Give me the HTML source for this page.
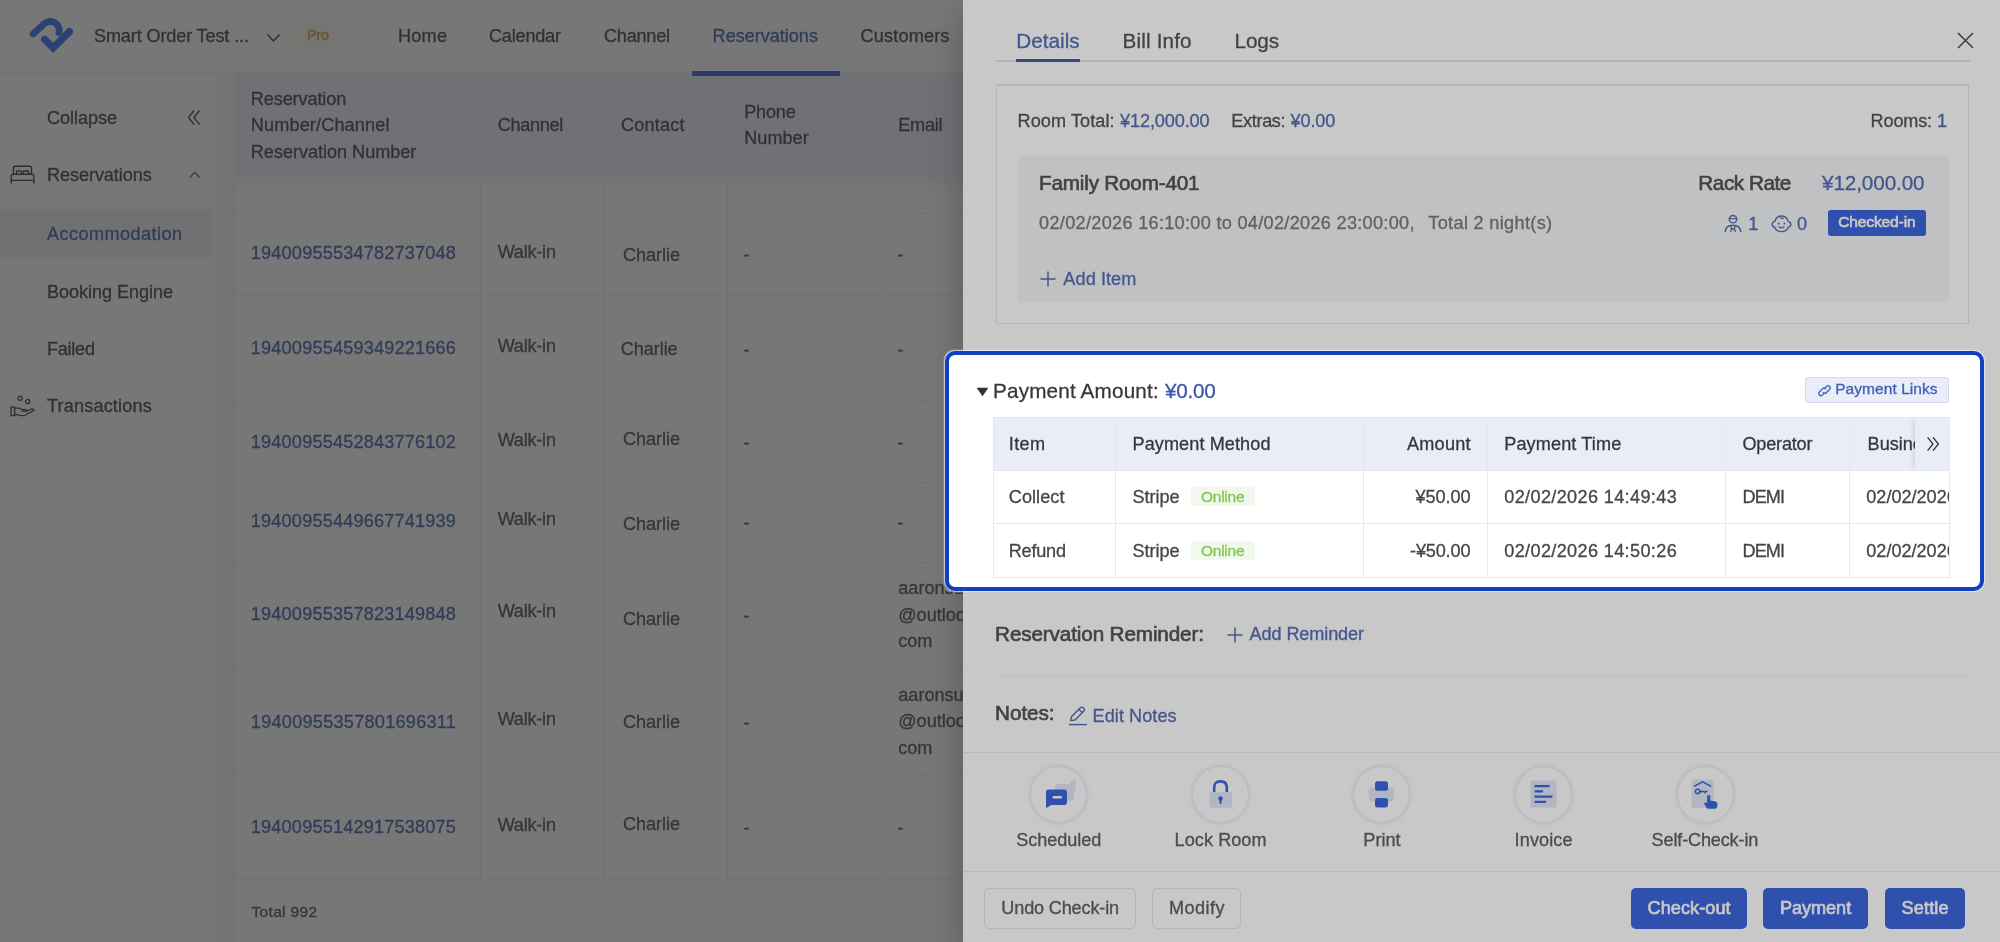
<!DOCTYPE html>
<html lang="en"><head><meta charset="utf-8"><title>Reservations</title>
<style>
*{margin:0;padding:0}
html,body{width:2000px;height:942px;overflow:hidden;background:#fff}
body{position:relative;font-family:"Liberation Sans",sans-serif;}
.t{position:absolute;white-space:nowrap;line-height:1;-webkit-text-stroke:0.3px currentColor;filter:blur(0.45px);}
svg{filter:blur(0.4px);}
.m{-webkit-text-stroke:0.65px currentColor;}
#app{position:absolute;left:0;top:0;width:2000px;height:942px;overflow:hidden;}
#mask{position:absolute;left:0;top:0;width:2000px;height:942px;background:rgba(0,0,0,.47);}
#drawer{position:absolute;left:963.4px;top:0;width:1036.6px;height:942px;background:#fff;overflow:hidden;
 box-shadow:0 10px 13px -6px rgba(0,0,0,.2),0 20px 31px 3px rgba(0,0,0,.14),0 8px 39px 6px rgba(0,0,0,.12);}
#tour{position:absolute;left:0;top:0;width:2000px;height:942px;background:rgba(89,89,89,.33);}
#hl{position:absolute;left:945px;top:351px;width:1031px;height:232px;background:#fff;border:4px solid #1041c1;border-radius:10px;overflow:hidden;box-shadow:0 0 1.5px 0.5px rgba(225,232,255,.9);}
#app,#drawer,#hl{will-change:transform;}
</style></head>
<body>
<div id="app"><header style="position:absolute;left:0.00px;top:0.00px;width:2000.00px;height:73.50px;background:#fff;border-bottom:1px solid #e6e6e6;box-sizing:border-box;"><svg style="position:absolute;left:26.00px;top:14.00px;" width="52.00" height="44.00" viewBox="0 0 52.00 44.00" fill="none"><path d="M7.2 20 L18 9.9 Q23.8 4.9 29.8 9.3 Q34.6 13.6 32.8 18.6" stroke="#2b6cf5" stroke-width="6.8" stroke-linecap="round" stroke-linejoin="round"/><path d="M18.6 25.2 L27.2 33.8 L43.4 17.6" stroke="#2b6cf5" stroke-width="7.2" stroke-linecap="round" stroke-linejoin="miter"/></svg><span class="t" style="left:94.00px;top:27.00px;font-size:18.1px;color:#36383b;letter-spacing:-0.136px;">Smart Order Test ...</span><svg style="position:absolute;left:266.00px;top:33.00px;" width="15.00" height="10.00" viewBox="0 0 15.00 10.00" fill="none"><path d="M1.5 1.5 L7.5 8 L13.5 1.5" stroke="#303133" stroke-width="1.4"/></svg><div style="position:absolute;left:288.50px;top:24.00px;width:55.00px;height:24.00px;background:#fbf8ee;border-radius:3px;"></div><span class="t m" style="left:307.00px;top:28.00px;font-size:14.2px;color:#d9a13f;letter-spacing:-0.149px;">Pro</span><div style="position:absolute;left:365.00px;top:25.00px;width:1.00px;height:23.00px;background:#f2f3f5;"></div><span class="t" style="left:398.00px;top:27.00px;font-size:18.1px;color:#36383b;letter-spacing:0.239px;">Home</span><span class="t" style="left:489.00px;top:27.00px;font-size:18.1px;color:#36383b;letter-spacing:-0.208px;">Calendar</span><span class="t" style="left:604.00px;top:27.00px;font-size:18.1px;color:#36383b;letter-spacing:-0.238px;">Channel</span><span class="t" style="left:712.60px;top:27.00px;font-size:18.1px;color:#3a56a6;letter-spacing:-0.021px;">Reservations</span><span class="t" style="left:860.60px;top:27.00px;font-size:18.1px;color:#36383b;letter-spacing:0.162px;">Customers</span></header><aside style="position:absolute;left:0.00px;top:73.50px;width:213.00px;height:868.50px;background:#fff;"><div style="position:absolute;left:0.00px;top:135.50px;width:213.00px;height:48.00px;background:#eeeff6;"></div><span class="t" style="left:47.00px;top:35.50px;font-size:18.1px;color:#36383b;letter-spacing:-0.062px;">Collapse</span><svg style="position:absolute;left:187.00px;top:35.50px;" width="14.00" height="17.00" viewBox="0 0 14.00 17.00" fill="none"><path d="M7 1.5 L1.5 8.5 L7 15.5 M12.5 1.5 L7 8.5 L12.5 15.5" stroke="#303133" stroke-width="1.3"/></svg><svg style="position:absolute;left:10.00px;top:91.50px;" width="25.00" height="20.00" viewBox="0 0 25.00 20.00" fill="none"><path d="M3.5 9 V3 Q3.5 1.2 5.3 1.2 H19.7 Q21.5 1.2 21.5 3 V9" stroke="#303133" stroke-width="1.4"/><path d="M6.5 9 V6.8 Q6.5 6 7.3 6 H10.8 Q11.6 6 11.6 6.8 V9 M13.4 9 V6.8 Q13.4 6 14.2 6 H17.7 Q18.5 6 18.5 6.8 V9" stroke="#303133" stroke-width="1.3"/><path d="M1.2 18.6 V11 Q1.2 9.2 3 9.2 H22 Q23.8 9.2 23.8 11 V18.6 M1.2 15.4 H23.8" stroke="#303133" stroke-width="1.4"/></svg><span class="t" style="left:47.00px;top:92.50px;font-size:18.1px;color:#36383b;letter-spacing:-0.076px;">Reservations</span><svg style="position:absolute;left:187.50px;top:96.50px;" width="13.50" height="10.00" viewBox="0 0 13.50 10.00" fill="none"><path d="M1.6 7.6 L6.75 2.4 L11.9 7.6" stroke="#55575b" stroke-width="1.3"/></svg><span class="t" style="left:47.00px;top:151.50px;font-size:18.1px;color:#3a56a6;letter-spacing:0.435px;">Accommodation</span><span class="t" style="left:47.00px;top:209.50px;font-size:18.1px;color:#36383b;letter-spacing:-0.062px;">Booking Engine</span><span class="t" style="left:47.00px;top:266.50px;font-size:18.1px;color:#36383b;letter-spacing:-0.260px;">Failed</span><svg style="position:absolute;left:10.00px;top:321.50px;" width="25.00" height="23.00" viewBox="0 0 25.00 23.00" fill="none"><circle cx="10.2" cy="3.2" r="2.1" stroke="#303133" stroke-width="1.3"/><circle cx="17.6" cy="6.6" r="2.1" stroke="#303133" stroke-width="1.3"/><path d="M1 12.2 H4.6 V20.6 H1 Z" stroke="#303133" stroke-width="1.3"/><path d="M4.6 13.2 H9 Q11 13.2 12.2 14.6 H15.4 Q17 14.6 17 16.2 H11.4 M17 16 L21.6 14 Q23.6 13.6 24 15.4 L15.6 20 Q13.6 21 11.6 20.6 L4.6 19.4" stroke="#303133" stroke-width="1.3" stroke-linejoin="round"/></svg><span class="t" style="left:47.00px;top:323.50px;font-size:18.1px;color:#36383b;letter-spacing:0.168px;">Transactions</span></aside><main style="position:absolute;left:214.50px;top:73.50px;width:1785.50px;height:868.50px;background:#f5f6f8;overflow:hidden;"><div style="position:absolute;left:20.50px;top:0.00px;width:865.00px;height:868.50px;background:#fff;"></div><div style="position:absolute;left:20.50px;top:0.00px;width:865.00px;height:117.50px;background:linear-gradient(to bottom,#ebeef6 0,#ebeef6 86%,rgba(235,238,246,0) 100%);"></div><div style="position:absolute;left:20.50px;top:139.50px;width:865.00px;height:1.00px;background:#eceef3;"></div><div style="position:absolute;left:20.50px;top:221.50px;width:865.00px;height:1.00px;background:#eceef3;"></div><div style="position:absolute;left:20.50px;top:327.50px;width:865.00px;height:1.00px;background:#eceef3;"></div><div style="position:absolute;left:266.50px;top:408.50px;width:619.00px;height:1.00px;background:#eceef3;"></div><div style="position:absolute;left:20.50px;top:488.50px;width:865.00px;height:1.00px;background:#eceef3;"></div><div style="position:absolute;left:20.50px;top:594.50px;width:865.00px;height:1.00px;background:#eceef3;"></div><div style="position:absolute;left:20.50px;top:700.50px;width:865.00px;height:1.00px;background:#eceef3;"></div><div style="position:absolute;left:20.50px;top:805.50px;width:865.00px;height:1.00px;background:#eceef3;"></div><div style="position:absolute;left:20.50px;top:0.00px;width:1.00px;height:806.50px;background:#eceef3;"></div><div style="position:absolute;left:265.50px;top:0.00px;width:1.00px;height:806.50px;background:#eceef3;"></div><div style="position:absolute;left:388.50px;top:0.00px;width:1.00px;height:806.50px;background:#eceef3;"></div><div style="position:absolute;left:512.50px;top:0.00px;width:1.00px;height:806.50px;background:#eceef3;"></div><div style="position:absolute;left:667.50px;top:0.00px;width:1.00px;height:806.50px;background:#eceef3;"></div><span class="t" style="left:36.30px;top:16.50px;font-size:18.1px;color:#36383b;letter-spacing:-0.108px;">Reservation</span><span class="t" style="left:36.30px;top:42.50px;font-size:18.1px;color:#36383b;letter-spacing:0.144px;">Number/Channel</span><span class="t" style="left:36.30px;top:69.50px;font-size:18.1px;color:#36383b;letter-spacing:-0.023px;">Reservation Number</span><span class="t" style="left:283.20px;top:42.50px;font-size:18.1px;color:#36383b;letter-spacing:-0.304px;">Channel</span><span class="t" style="left:406.50px;top:42.50px;font-size:18.1px;color:#36383b;letter-spacing:0.187px;">Contact</span><span class="t" style="left:529.75px;top:29.50px;font-size:18.1px;color:#36383b;letter-spacing:-0.210px;">Phone</span><span class="t" style="left:529.75px;top:55.50px;font-size:18.1px;color:#36383b;letter-spacing:0.024px;">Number</span><span class="t" style="left:683.75px;top:42.50px;font-size:18.1px;color:#36383b;letter-spacing:-0.253px;">Email</span><span class="t" style="left:36.30px;top:170.50px;font-size:18.1px;color:#3a56a6;letter-spacing:0.203px;">19400955534782737048</span><span class="t" style="left:283.20px;top:169.50px;font-size:18.1px;color:#44464a;letter-spacing:-0.228px;">Walk-in</span><span class="t" style="left:408.50px;top:172.50px;font-size:18.1px;color:#44464a;letter-spacing:-0.057px;">Charlie</span><span class="t" style="left:529.00px;top:172.50px;font-size:18.1px;color:#44464a;">-</span><span class="t" style="left:683.00px;top:172.50px;font-size:18.1px;color:#44464a;">-</span><span class="t" style="left:36.30px;top:265.50px;font-size:18.1px;color:#3a56a6;letter-spacing:0.203px;">19400955459349221666</span><span class="t" style="left:283.20px;top:263.50px;font-size:18.1px;color:#44464a;letter-spacing:-0.228px;">Walk-in</span><span class="t" style="left:406.20px;top:266.50px;font-size:18.1px;color:#44464a;letter-spacing:-0.057px;">Charlie</span><span class="t" style="left:529.00px;top:267.50px;font-size:18.1px;color:#44464a;">-</span><span class="t" style="left:683.00px;top:267.50px;font-size:18.1px;color:#44464a;">-</span><span class="t" style="left:36.30px;top:359.50px;font-size:18.1px;color:#3a56a6;letter-spacing:0.203px;">19400955452843776102</span><span class="t" style="left:283.20px;top:357.50px;font-size:18.1px;color:#44464a;letter-spacing:-0.228px;">Walk-in</span><span class="t" style="left:408.50px;top:356.50px;font-size:18.1px;color:#44464a;letter-spacing:-0.057px;">Charlie</span><span class="t" style="left:529.00px;top:360.50px;font-size:18.1px;color:#44464a;">-</span><span class="t" style="left:683.00px;top:360.50px;font-size:18.1px;color:#44464a;">-</span><span class="t" style="left:36.30px;top:438.50px;font-size:18.1px;color:#3a56a6;letter-spacing:0.203px;">19400955449667741939</span><span class="t" style="left:283.20px;top:436.50px;font-size:18.1px;color:#44464a;letter-spacing:-0.228px;">Walk-in</span><span class="t" style="left:408.50px;top:441.50px;font-size:18.1px;color:#44464a;letter-spacing:-0.057px;">Charlie</span><span class="t" style="left:529.00px;top:440.50px;font-size:18.1px;color:#44464a;">-</span><span class="t" style="left:683.00px;top:440.50px;font-size:18.1px;color:#44464a;">-</span><span class="t" style="left:36.30px;top:531.50px;font-size:18.1px;color:#3a56a6;letter-spacing:0.203px;">19400955357823149848</span><span class="t" style="left:283.20px;top:528.50px;font-size:18.1px;color:#44464a;letter-spacing:-0.228px;">Walk-in</span><span class="t" style="left:408.50px;top:536.50px;font-size:18.1px;color:#44464a;letter-spacing:-0.057px;">Charlie</span><span class="t" style="left:529.00px;top:533.50px;font-size:18.1px;color:#44464a;">-</span><span class="t" style="left:683.75px;top:505.50px;font-size:18.1px;color:#44464a;">aaronsun</span><span class="t" style="left:683.75px;top:532.50px;font-size:18.1px;color:#44464a;">@outlook.</span><span class="t" style="left:683.75px;top:558.50px;font-size:18.1px;color:#44464a;">com</span><span class="t" style="left:36.30px;top:639.50px;font-size:18.1px;color:#3a56a6;letter-spacing:0.274px;">19400955357801696311</span><span class="t" style="left:283.20px;top:636.50px;font-size:18.1px;color:#44464a;letter-spacing:-0.228px;">Walk-in</span><span class="t" style="left:408.50px;top:639.50px;font-size:18.1px;color:#44464a;letter-spacing:-0.057px;">Charlie</span><span class="t" style="left:529.00px;top:640.50px;font-size:18.1px;color:#44464a;">-</span><span class="t" style="left:683.75px;top:612.50px;font-size:18.1px;color:#44464a;">aaronsun</span><span class="t" style="left:683.75px;top:638.50px;font-size:18.1px;color:#44464a;">@outlook.</span><span class="t" style="left:683.75px;top:665.50px;font-size:18.1px;color:#44464a;">com</span><span class="t" style="left:36.30px;top:744.50px;font-size:18.1px;color:#3a56a6;letter-spacing:0.203px;">19400955142917538075</span><span class="t" style="left:283.20px;top:742.50px;font-size:18.1px;color:#44464a;letter-spacing:-0.228px;">Walk-in</span><span class="t" style="left:408.50px;top:741.50px;font-size:18.1px;color:#44464a;letter-spacing:-0.057px;">Charlie</span><span class="t" style="left:529.00px;top:745.50px;font-size:18.1px;color:#44464a;">-</span><span class="t" style="left:683.00px;top:745.50px;font-size:18.1px;color:#44464a;">-</span><span class="t" style="left:37.00px;top:830.50px;font-size:15.5px;color:#44464a;letter-spacing:0.324px;">Total 992</span></main><div style="position:absolute;left:691.50px;top:70.60px;width:148.10px;height:5.00px;background:#3055e0;"></div></div>
<div id="mask"></div>
<div id="drawer"><span class="t" style="left:53.35px;top:31.00px;font-size:20.7px;color:#3a56a6;">Details</span><span class="t" style="left:159.60px;top:31.00px;font-size:20.7px;color:#36383b;letter-spacing:0.140px;">Bill Info</span><span class="t" style="left:271.60px;top:31.00px;font-size:20.7px;color:#36383b;letter-spacing:-0.129px;">Logs</span><div style="position:absolute;left:32.60px;top:59.50px;width:974.00px;height:2.10px;background:#dfe0e4;"></div><div style="position:absolute;left:53.35px;top:59.30px;width:63.25px;height:2.60px;background:#22408f;"></div><svg style="position:absolute;left:992.60px;top:30.80px;" width="19.00" height="19.00" viewBox="0 0 19.00 19.00" fill="none"><path d="M2 2 L17 17 M17 2 L2 17" stroke="#303133" stroke-width="1.5"/></svg><div style="position:absolute;left:32.60px;top:84.00px;width:973.50px;height:240.00px;border:1px solid #e3e6ed;box-sizing:border-box;border-top-width:2px;"></div><span class="t" style="left:54.60px;top:112.00px;font-size:18.1px;color:#36383b;letter-spacing:0.075px;">Room Total:</span><span class="t" style="left:157.10px;top:112.00px;font-size:18.1px;color:#3a56a6;letter-spacing:-0.121px;">¥12,000.00</span><span class="t" style="left:268.35px;top:112.00px;font-size:18.1px;color:#36383b;letter-spacing:-0.346px;">Extras:</span><span class="t" style="left:327.60px;top:112.00px;font-size:18.1px;color:#3a56a6;letter-spacing:-0.136px;">¥0.00</span><span class="t" style="left:907.60px;top:112.00px;font-size:18.1px;color:#36383b;letter-spacing:-0.172px;">Rooms:</span><span class="t" style="left:974.10px;top:112.00px;font-size:18.1px;color:#3a56a6;">1</span><div style="position:absolute;left:55.35px;top:156.00px;width:930.25px;height:146.00px;background:#f4f5f8;border-radius:3px;"></div><span class="t m" style="left:76.10px;top:173.00px;font-size:20.7px;color:#36383b;letter-spacing:-0.204px;">Family Room-401</span><span class="t m" style="left:735.35px;top:173.00px;font-size:20.7px;color:#36383b;letter-spacing:-0.455px;">Rack Rate</span><span class="t" style="left:859.10px;top:173.00px;font-size:20.7px;color:#3a56a6;letter-spacing:-0.123px;">¥12,000.00</span><span class="t" style="left:76.10px;top:214.00px;font-size:18.1px;color:#636569;letter-spacing:0.314px;">02/02/2026 16:10:00 to 04/02/2026 23:00:00,</span><span class="t" style="left:465.35px;top:214.00px;font-size:18.1px;color:#636569;letter-spacing:0.336px;">Total 2 night(s)</span><svg style="position:absolute;left:761.10px;top:213.50px;" width="18.00" height="19.00" viewBox="0 0 18.00 19.00" fill="none"><circle cx="9" cy="5.2" r="3.7" stroke="#3a56a6" stroke-width="1.4"/><path d="M5.4 4.6 H12.6" stroke="#3a56a6" stroke-width="1.2"/><path d="M1.2 18 Q1.6 11.2 9 11.2 Q16.4 11.2 16.8 18" stroke="#3a56a6" stroke-width="1.4"/><path d="M6.2 12 L9 15.6 L11.8 12 M6.6 18 L7.6 14 M11.4 18 L10.4 14" stroke="#3a56a6" stroke-width="1.2"/></svg><span class="t" style="left:785.20px;top:215.00px;font-size:18.1px;color:#3a56a6;">1</span><svg style="position:absolute;left:808.10px;top:213.50px;" width="21.00" height="19.00" viewBox="0 0 21.00 19.00" fill="none"><path d="M10.5 2 Q15.6 2 17.2 7.4 Q19.8 8 19.8 10.4 Q19.8 12.8 17.4 13.2 Q15.6 17.6 10.5 17.6 Q5.4 17.6 3.6 13.2 Q1.2 12.8 1.2 10.4 Q1.2 8 3.8 7.4 Q5.4 2 10.5 2 Z" stroke="#3a56a6" stroke-width="1.4"/><path d="M9.2 2.2 Q10.2 5.4 13 4.2" stroke="#3a56a6" stroke-width="1.2"/><circle cx="7.6" cy="9.4" r="1" fill="#3a56a6"/><circle cx="13.4" cy="9.4" r="1" fill="#3a56a6"/><path d="M7.6 12.6 Q10.5 15 13.4 12.6" stroke="#3a56a6" stroke-width="1.3"/></svg><span class="t" style="left:833.90px;top:215.00px;font-size:18.1px;color:#3a56a6;">0</span><div style="position:absolute;left:864.50px;top:209.60px;width:98.40px;height:26.00px;background:#1c4cd6;border-radius:3px;"></div><span class="t m" style="left:875.30px;top:214.00px;font-size:15.5px;color:#fff;letter-spacing:-0.123px;">Checked-in</span><div style="position:absolute;left:76.10px;top:252.60px;width:887.50px;height:1.00px;background:#e9ecf2;"></div><svg style="position:absolute;left:75.60px;top:270.00px;" width="18.00" height="18.00" viewBox="0 0 18.00 18.00" fill="none"><path d="M9 1.5 V16.5 M1.5 9 H16.5" stroke="#3a56a6" stroke-width="1.5"/></svg><span class="t" style="left:100.35px;top:270.00px;font-size:18.1px;color:#3a56a6;letter-spacing:0.080px;">Add Item</span><span class="t m" style="left:32.10px;top:624.00px;font-size:20.7px;color:#36383b;letter-spacing:-0.135px;">Reservation Reminder:</span><svg style="position:absolute;left:262.60px;top:625.50px;" width="18.00" height="18.00" viewBox="0 0 18.00 18.00" fill="none"><path d="M9 1.5 V16.5 M1.5 9 H16.5" stroke="#3a56a6" stroke-width="1.5"/></svg><span class="t" style="left:286.60px;top:625.00px;font-size:18.1px;color:#3a56a6;letter-spacing:-0.109px;">Add Reminder</span><div style="position:absolute;left:32.10px;top:675.00px;width:974.50px;height:1.00px;border-top:1px dashed #e8eaee;"></div><span class="t m" style="left:32.10px;top:703.00px;font-size:20.7px;color:#36383b;letter-spacing:-0.065px;">Notes:</span><svg style="position:absolute;left:104.60px;top:705.00px;" width="20.00" height="21.00" viewBox="0 0 20.00 21.00" fill="none"><path d="M2.6 15.6 L3.6 11.6 L12.6 2.6 Q13.8 1.6 15 2.6 L16 3.6 Q17 4.8 16 6 L7 15 L2.6 15.6 Z M11 4.4 L14.2 7.6" stroke="#3a56a6" stroke-width="1.4" stroke-linejoin="round"/><path d="M1 19.6 H19" stroke="#3a56a6" stroke-width="1.4"/></svg><span class="t" style="left:129.60px;top:707.00px;font-size:18.1px;color:#3a56a6;letter-spacing:0.055px;">Edit Notes</span><div style="position:absolute;left:0.00px;top:752.00px;width:1036.60px;height:1.00px;background:#e4e7ed;"></div><div style="position:absolute;left:0.00px;top:871.00px;width:1036.60px;height:1.00px;background:#e4e7ed;"></div><div style="position:absolute;left:68.10px;top:767.00px;width:55.00px;height:55.00px;background:#fff;border-radius:50%;box-shadow:0 0 4px 1px rgba(120,135,180,.28);"><svg width="55" height="55" viewBox="0 0 55 55" fill="none"><path d="M24 20 Q24 17 27 17 H40 Q43 17 43 20 V31 Q43 34 40 34 H27 Q24 34 24 31 Z" fill="#dde4f7"/><path d="M39 15.5 L44.5 11.5 V24 L39 24 Z" fill="#dde4f7"/><path d="M15 25.5 Q15 22.5 18 22.5 H33 Q36 22.5 36 25.5 V35 Q36 38 33 38 H20.5 L15 41 Z" fill="#1c4cd6"/><rect x="21.5" y="29" width="9.5" height="2.4" rx="1.2" fill="#fff"/></svg></div><span class="t" style="left:53.35px;top:831.00px;font-size:18.1px;color:#44464a;letter-spacing:-0.068px;">Scheduled</span><div style="position:absolute;left:230.10px;top:767.00px;width:55.00px;height:55.00px;background:#fff;border-radius:50%;box-shadow:0 0 4px 1px rgba(120,135,180,.28);"><svg width="55" height="55" viewBox="0 0 55 55" fill="none"><path d="M21.2 26 V20.5 Q21.2 14.4 27.5 14.4 Q33.8 14.4 33.8 20.5 V26" stroke="#1c4cd6" stroke-width="2.6"/><rect x="16.5" y="25" width="22.5" height="15.8" rx="2.6" fill="#dde4f7"/><circle cx="27.5" cy="31.4" r="2.2" fill="#1c4cd6"/><path d="M27.5 32 V36" stroke="#1c4cd6" stroke-width="2" stroke-linecap="round"/></svg></div><span class="t" style="left:211.60px;top:831.00px;font-size:18.1px;color:#44464a;letter-spacing:0.057px;">Lock Room</span><div style="position:absolute;left:391.10px;top:767.00px;width:55.00px;height:55.00px;background:#fff;border-radius:50%;box-shadow:0 0 4px 1px rgba(120,135,180,.28);"><svg width="55" height="55" viewBox="0 0 55 55" fill="none"><rect x="14.8" y="20.4" width="25.4" height="14" rx="3.4" fill="#dde4f7"/><rect x="21" y="14.2" width="13" height="9.6" rx="2.6" fill="#1c4cd6"/><rect x="21" y="31" width="13" height="9.4" rx="2.6" fill="#1c4cd6"/></svg></div><span class="t" style="left:400.35px;top:831.00px;font-size:18.1px;color:#44464a;">Print</span><div style="position:absolute;left:552.90px;top:767.00px;width:55.00px;height:55.00px;background:#fff;border-radius:50%;box-shadow:0 0 4px 1px rgba(120,135,180,.28);"><svg width="55" height="55" viewBox="0 0 55 55" fill="none"><rect x="14.6" y="13.6" width="26" height="27" rx="1.6" fill="#dde4f7"/><path d="M18.6 19.2 H33.6 M18.6 24.4 H27 M18.6 29.6 H36.4 M18.6 34.8 H30" stroke="#1c4cd6" stroke-width="2.3"/></svg></div><span class="t" style="left:551.60px;top:831.00px;font-size:18.1px;color:#44464a;letter-spacing:0.108px;">Invoice</span><div style="position:absolute;left:715.10px;top:767.00px;width:55.00px;height:55.00px;background:#fff;border-radius:50%;box-shadow:0 0 4px 1px rgba(120,135,180,.28);"><svg width="55" height="55" viewBox="0 0 55 55" fill="none"><rect x="13.6" y="12.6" width="22" height="28.4" rx="2.2" fill="#dde4f7"/><path d="M16 19.4 L24.6 14.8 L33.2 19.4" stroke="#1c4cd6" stroke-width="1.6"/><circle cx="19.6" cy="24.4" r="2.2" stroke="#1c4cd6" stroke-width="1.5"/><path d="M21.8 24.4 H29.6 M27 24.4 V26.4" stroke="#1c4cd6" stroke-width="1.5"/><path d="M29.2 28.6 Q30.8 27.4 32.2 28.8 V33.4 L37.6 34.6 Q39.6 35.2 39.4 37.2 L39 40.2 Q38.6 41.8 37 41.8 H30.6 Q29.2 41.8 28.4 40.6 L26 36.6 Q27 34.6 29.2 36 Z" fill="#1c4cd6"/></svg></div><span class="t" style="left:688.60px;top:831.00px;font-size:18.1px;color:#44464a;letter-spacing:-0.157px;">Self-Check-in</span><div style="position:absolute;left:21.10px;top:888.00px;width:151.50px;height:41.00px;border:1px solid #e0e3e9;border-radius:5px;box-sizing:border-box;background:#fff;"></div><span class="t" style="left:38.35px;top:899.00px;font-size:18.1px;color:#44464a;letter-spacing:-0.164px;">Undo Check-in</span><div style="position:absolute;left:189.10px;top:888.00px;width:88.50px;height:41.00px;border:1px solid #e0e3e9;border-radius:5px;box-sizing:border-box;background:#fff;"></div><span class="t" style="left:206.10px;top:899.00px;font-size:18.1px;color:#44464a;letter-spacing:0.438px;">Modify</span><div style="position:absolute;left:667.60px;top:887.60px;width:116.60px;height:41.40px;background:#1c4cd6;border-radius:5px;"></div><span class="t m" style="left:684.60px;top:899.00px;font-size:18.1px;color:#fff;letter-spacing:0.063px;">Check-out</span><div style="position:absolute;left:800.00px;top:887.60px;width:105.00px;height:41.40px;background:#1c4cd6;border-radius:5px;"></div><span class="t m" style="left:817.00px;top:899.00px;font-size:18.1px;color:#fff;letter-spacing:-0.038px;">Payment</span><div style="position:absolute;left:922.20px;top:887.60px;width:79.80px;height:41.40px;background:#1c4cd6;border-radius:5px;"></div><span class="t m" style="left:938.60px;top:899.00px;font-size:18.1px;color:#fff;letter-spacing:0.143px;">Settle</span></div>
<div id="tour"></div>
<section id="hl"><svg style="position:absolute;left:26.80px;top:31.80px;" width="13.00" height="10.00" viewBox="0 0 13.00 10.00" fill="none"><path d="M0.6 0.8 H12.4 L6.5 9.2 Z" fill="#303133"/></svg><span class="t" style="left:44.00px;top:26.00px;font-size:20.7px;color:#36383b;letter-spacing:0.169px;">Payment Amount:</span><span class="t" style="left:216.00px;top:26.00px;font-size:20.7px;color:#3a56a6;letter-spacing:-0.263px;">¥0.00</span><div style="position:absolute;left:856.00px;top:22.20px;width:144.40px;height:25.60px;background:#e9edf9;border:1px solid #d2daf0;border-radius:3px;box-sizing:border-box;"></div><svg style="position:absolute;left:868.00px;top:28.50px;" width="15.00" height="13.50" viewBox="0 0 15.00 13.50" fill="none"><path d="M6.4 8.6 Q7.8 10 9.4 8.6 L12.6 5.4 Q14 3.8 12.6 2.4 Q11 1 9.6 2.4 L8.4 3.6 M8.6 4.8 Q7.2 3.4 5.6 4.8 L2.4 8 Q1 9.6 2.4 11 Q4 12.4 5.4 11 L6.6 9.8" stroke="#4a69b8" stroke-width="1.4" stroke-linecap="round"/></svg><span class="t" style="left:886.20px;top:26.00px;font-size:15.5px;color:#3f5fb4;letter-spacing:0.062px;">Payment Links</span><div style="position:absolute;left:44.00px;top:62.00px;width:957.00px;height:53.00px;background:#e9edf7;"></div><div style="position:absolute;left:44.00px;top:62.00px;width:957.00px;height:1.00px;background:#e6e8ed;"></div><div style="position:absolute;left:44.00px;top:115.00px;width:957.00px;height:1.00px;background:#e6e8ed;"></div><div style="position:absolute;left:44.00px;top:168.00px;width:957.00px;height:1.00px;background:#e6e8ed;"></div><div style="position:absolute;left:44.00px;top:222.00px;width:957.00px;height:1.00px;background:#e6e8ed;"></div><div style="position:absolute;left:44.00px;top:62.00px;width:1.00px;height:161.00px;background:#e6e8ed;"></div><div style="position:absolute;left:166.00px;top:62.00px;width:1.00px;height:161.00px;background:#e6e8ed;"></div><div style="position:absolute;left:414.00px;top:62.00px;width:1.00px;height:161.00px;background:#e6e8ed;"></div><div style="position:absolute;left:538.00px;top:62.00px;width:1.00px;height:161.00px;background:#e6e8ed;"></div><div style="position:absolute;left:776.00px;top:62.00px;width:1.00px;height:161.00px;background:#e6e8ed;"></div><div style="position:absolute;left:900.00px;top:62.00px;width:1.00px;height:161.00px;background:#e6e8ed;"></div><div style="position:absolute;left:1000.00px;top:62.00px;width:1.00px;height:161.00px;background:#e6e8ed;"></div><span class="t" style="left:59.75px;top:80.00px;font-size:18.1px;color:#36383b;letter-spacing:0.349px;">Item</span><span class="t" style="left:183.50px;top:80.00px;font-size:18.1px;color:#36383b;letter-spacing:0.090px;">Payment Method</span><span class="t" style="left:458.00px;top:80.00px;font-size:18.1px;color:#36383b;letter-spacing:0.224px;">Amount</span><span class="t" style="left:555.25px;top:80.00px;font-size:18.1px;color:#36383b;letter-spacing:0.120px;">Payment Time</span><span class="t" style="left:793.50px;top:80.00px;font-size:18.1px;color:#36383b;letter-spacing:-0.204px;">Operator</span><div style="position:absolute;left:901.00px;top:63.00px;width:99.00px;height:158.60px;overflow:hidden;"><span class="t" style="left:17.60px;top:17.00px;font-size:18.1px;color:#36383b;">Business Date</span><span class="t" style="left:16.25px;top:70.00px;font-size:18.1px;color:#44464a;">02/02/2026</span><span class="t" style="left:16.25px;top:124.00px;font-size:18.1px;color:#44464a;">02/02/2026</span></div><div style="position:absolute;left:966.00px;top:63.00px;width:34.00px;height:52.00px;background:#e9edf7;box-shadow:-3px 0 5px -2px rgba(90,100,130,.25);"></div><svg style="position:absolute;left:977.00px;top:81.00px;" width="15.00" height="16.00" viewBox="0 0 15.00 16.00" fill="none"><path d="M1.6 1.4 L7 8 L1.6 14.6 M7 1.4 L12.4 8 L7 14.6" stroke="#303133" stroke-width="1.3"/></svg><span class="t" style="left:59.75px;top:133.00px;font-size:18.1px;color:#44464a;letter-spacing:0.071px;">Collect</span><span class="t" style="left:183.50px;top:133.00px;font-size:18.1px;color:#44464a;letter-spacing:-0.057px;">Stripe</span><div style="position:absolute;left:241.75px;top:132.25px;width:64.25px;height:19.00px;background:#f0f9eb;border-radius:3px;"></div><span class="t" style="left:252.00px;top:134.00px;font-size:15.5px;color:#84c655;letter-spacing:-0.261px;">Online</span><span class="t" style="left:466.50px;top:133.00px;font-size:18.1px;color:#44464a;letter-spacing:-0.072px;">¥50.00</span><span class="t" style="left:555.25px;top:133.00px;font-size:18.1px;color:#44464a;letter-spacing:0.357px;">02/02/2026 14:49:43</span><span class="t" style="left:793.50px;top:133.00px;font-size:18.1px;color:#44464a;letter-spacing:-0.917px;">DEMI</span><span class="t" style="left:59.75px;top:187.00px;font-size:18.1px;color:#44464a;letter-spacing:-0.223px;">Refund</span><span class="t" style="left:183.50px;top:187.00px;font-size:18.1px;color:#44464a;letter-spacing:-0.057px;">Stripe</span><div style="position:absolute;left:241.75px;top:186.00px;width:64.25px;height:19.00px;background:#f0f9eb;border-radius:3px;"></div><span class="t" style="left:252.00px;top:188.00px;font-size:15.5px;color:#84c655;letter-spacing:-0.261px;">Online</span><span class="t" style="left:461.00px;top:187.00px;font-size:18.1px;color:#44464a;letter-spacing:-0.148px;">-¥50.00</span><span class="t" style="left:555.25px;top:187.00px;font-size:18.1px;color:#44464a;letter-spacing:0.357px;">02/02/2026 14:50:26</span><span class="t" style="left:793.50px;top:187.00px;font-size:18.1px;color:#44464a;letter-spacing:-0.917px;">DEMI</span></section>
</body></html>
